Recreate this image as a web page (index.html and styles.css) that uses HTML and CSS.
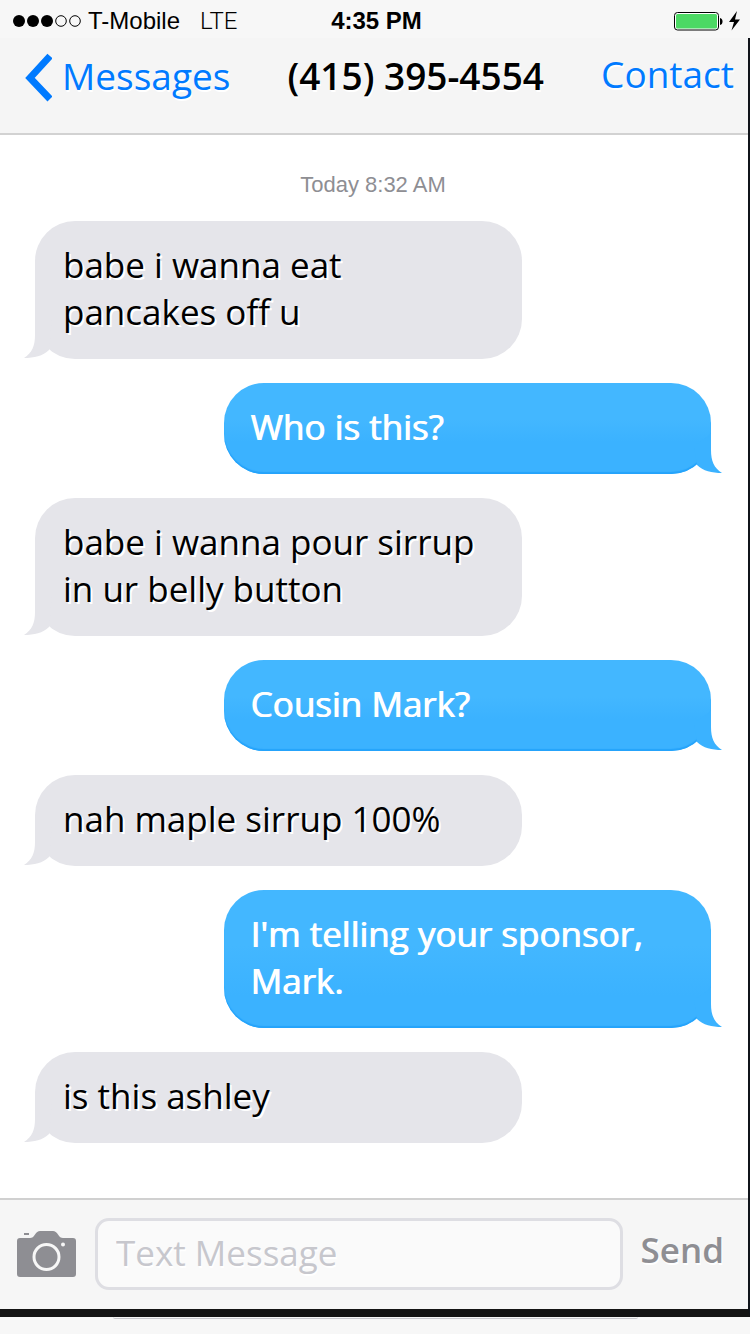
FILE: index.html
```html
<!DOCTYPE html>
<html lang="en">
<head>
<meta charset="utf-8">
<meta name="viewport" content="width=device-width, initial-scale=1">
<title>Messages</title>
<link rel="stylesheet" href="styles.css">
</head>
<body>
<header class="status">
  <div class="carrier">
    <svg class="signal" width="70" height="14" viewBox="0 0 70 14" aria-hidden="true">
      <g fill="#000"><circle cx="7" cy="7" r="6"/><circle cx="21" cy="7" r="6"/><circle cx="35" cy="7" r="6"/></g>
      <g fill="none" stroke="#000"><circle cx="49" cy="7" r="5.3"/><circle cx="63" cy="7" r="5.3"/></g>
    </svg>
    <span>T-Mobile</span>
    <span class="network">LTE</span>
  </div>
  <time class="clock">4:35 PM</time>
  <svg class="battery" width="68" height="20" viewBox="0 0 68 20" aria-hidden="true">
    <rect x="1.5" y="1.5" width="44" height="17.5" rx="3" fill="#fff" stroke="#000"/>
    <rect x="3" y="3" width="41" height="14.5" rx="1.5" fill="#4cd964"/>
    <path d="M47 7q2.500.5 2.500 3.500t-2.500 3.500z" fill="#000"/>
    <path d="M64 0 56 11h5l-2.500 8.500L67 8.500h-5z" fill="#000"/>
  </svg>
</header>
<main class="screen">
  <nav class="bar">
    <a class="back" href="#">
      <svg width="28" height="52" viewBox="0 0 28 52" aria-hidden="true"><path d="M26 6 6 28l20 21" fill="none" stroke="#007aff" stroke-width="7"/></svg>
      Messages
    </a>
    <h1 class="title">(415) 395-4554</h1>
    <a class="contact" href="#">Contact</a>
  </nav>
  <section class="thread">
    <time class="stamp">Today 8:32 AM</time>
    <p class="bubble received">babe i wanna eat pancakes off u<svg class="tail" width="28" height="40" viewBox="0 0 28 40" aria-hidden="true"><path d="M11 0V16C11 27 8 34 0 39 10 39 19 37 25 31L28 0z"/></svg></p>
    <p class="bubble sent">Who is this?<svg class="tail" width="28" height="40" viewBox="0 0 28 40" aria-hidden="true"><path d="M17 0V16C17 27 20 34 28 39 18 39 9 37 3 31L0 12z"/></svg></p>
    <p class="bubble received">babe i wanna pour sirrup in ur belly button<svg class="tail" width="28" height="40" viewBox="0 0 28 40" aria-hidden="true"><path d="M11 0V16C11 27 8 34 0 39 10 39 19 37 25 31L28 0z"/></svg></p>
    <p class="bubble sent">Cousin Mark?<svg class="tail" width="28" height="40" viewBox="0 0 28 40" aria-hidden="true"><path d="M17 0V16C17 27 20 34 28 39 18 39 9 37 3 31L0 12z"/></svg></p>
    <p class="bubble received">nah maple sirrup 100%<svg class="tail" width="28" height="40" viewBox="0 0 28 40" aria-hidden="true"><path d="M11 0V16C11 27 8 34 0 39 10 39 19 37 25 31L28 0z"/></svg></p>
    <p class="bubble sent">I'm telling your sponsor, Mark.<svg class="tail" width="28" height="40" viewBox="0 0 28 40" aria-hidden="true"><path d="M17 0V16C17 27 20 34 28 39 18 39 9 37 3 31L0 12z"/></svg></p>
    <p class="bubble received">is this ashley<svg class="tail" width="28" height="40" viewBox="0 0 28 40" aria-hidden="true"><path d="M11 0V16C11 27 8 34 0 39 10 39 19 37 25 31L28 0z"/></svg></p>
  </section>
  <form class="composer">
    <button class="camera" type="button" aria-label="Attach photo">
      <svg width="60" height="48" viewBox="0 0 60 48" aria-hidden="true">
        <path d="M3 8H13Q16 8 18 4.500 20 1 23 1H36Q39 1 41 4.500 43 8 46 8H56Q59 8 59 11V44Q59 47 56 47H3Q0 47 0 44V11Q0 8 3 8z" fill="#8e8e93"/>
        <path d="M7 3h5v2H7z" fill="#8e8e93"/>
        <circle cx="29.500" cy="27" r="12.500" fill="none" stroke="#f7f7f7" stroke-width="3"/>
        <circle cx="46" cy="14.500" r="2" fill="#f7f7f7"/>
      </svg>
    </button>
    <input class="field" type="text" placeholder="Text Message" aria-label="Text Message">
    <button class="send" type="button">Send</button>
  </form>
</main>
<footer class="under"><div class="edge"></div></footer>
</body>
</html>
```
FILE: styles.css
```css
* { box-sizing: border-box; }

body {
  margin: 0;
  min-height: 100vh;
  display: flex;
  flex-direction: column;
  background: #f7f7f7;
  color: #000;
  font-family: "Open Sans", "Noto Sans", sans-serif;
}

.status {
  display: grid;
  grid-template-columns: 1fr auto 1fr;
  align-items: center;
  height: 38px;
  padding: 3px 9px 0 12px;
  background: #f7f7f7;
  font: 24px/32px "Liberation Sans", Arial, sans-serif;
}

.carrier { display: flex; align-items: center; }
.signal { margin-right: 6px; }
.network { margin-left: 20px; font: 300 24px/32px Roboto, sans-serif; }
.clock { font-weight: 700; }
.battery { justify-self: end; }

.screen {
  flex: 1;
  display: flex;
  flex-direction: column;
  background: #fff;
  border-right: 2px solid #10141a;
  border-bottom: 8px solid #141414;
}

.bar {
  display: flex;
  justify-content: space-between;
  align-items: center;
  padding: 10px 14px 29px 24px;
  background: #f5f5f5;
  border-bottom: 2px solid #d2d2d2;
  font-size: 37px;
  line-height: 56px;
  text-shadow: 1px 2px 0 #fff;
}

.back, .contact { color: #007aff; text-decoration: none; }
.back { display: flex; align-items: center; gap: 10px; }
.contact { padding-bottom: 4px; line-height: 52px; }
.title { margin: 0; font-size: 37px; font-weight: 600; }

.thread {
  flex: 1;
  display: flex;
  flex-direction: column;
  gap: 24px;
  padding: 38px 37px 55px 35px;
}

.stamp {
  align-self: center;
  color: #8e8e93;
  font: 22px/24px "Liberation Sans", Arial, sans-serif;
}

.bubble {
  position: relative;
  width: 72%;
  margin: 0;
  padding: 20px 28px 24px;
  border-radius: 40px;
  font-size: 35px;
  line-height: 47px;
}

.received {
  align-self: flex-start;
  background: #e5e5ea;
  fill: #e5e5ea;
  text-shadow: 2px 2px 0 #fff;
}

.sent {
  align-self: flex-end;
  padding-left: 26px;
  color: #fff;
  text-shadow: 1px 0 0 #fff;
  background: linear-gradient(#43b7ff 40%, #3bb2ff calc(100% - 32px));
  box-shadow: inset 0 -2px 1px #25a3fb;
  fill: #3bb2ff;
}

.tail { position: absolute; bottom: 0; }
.received .tail { left: -11px; }
.sent .tail { right: -11px; }

.composer {
  display: flex;
  align-items: center;
  gap: 18px;
  padding: 18px 24px 19px 17px;
  background: #f6f6f6;
  border-top: 2px solid #d0d0d0;
}

.camera, .send { padding: 0; border: 0; background: none; }
.camera { display: flex; }

.field {
  flex: 1;
  min-width: 0;
  height: 72px;
  padding: 0 18px 4px;
  border: 3px solid #dedee3;
  border-radius: 14px;
  background: #fafafa;
  font: 35px "Open Sans", "Noto Sans", sans-serif;
}

.field::placeholder { color: #c7c7cd; opacity: 1; text-shadow: 1px 2px 0 #fff; }

.send {
  padding-bottom: 8px;
  color: #8e8e93;
  font: 600 35px/48px "Open Sans", "Noto Sans", sans-serif;
  text-shadow: 1px 2px 0 #fff;
}

.under { height: 17px; padding: 0 15%; }
.edge { height: 2px; border-bottom: 1px solid #c8c8cd; border-radius: 0 0 8px 8px; }
```
